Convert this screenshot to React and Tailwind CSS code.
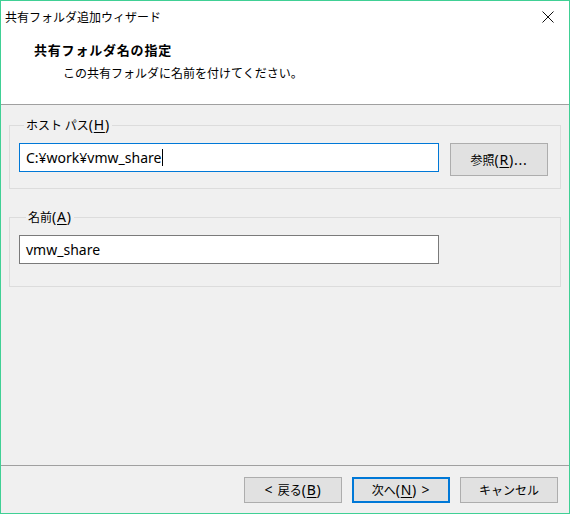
import React from "react";

const cjk = { fontFamily: '"Noto Sans CJK JP", "Noto Sans", sans-serif' };
const lat = { fontFamily: '"Noto Sans", "Noto Sans CJK JP", sans-serif' };

function U({ children }) {
  return <span className="underline underline-offset-[2px]">{children}</span>;
}

function L({ children }) {
  return (
    <span className="text-[14px] tracking-[0.8px]" style={lat}>
      {children}
    </span>
  );
}

function Btn({ children, primary, tall }) {
  return (
    <div
      className={
        "w-[98px] flex items-center justify-center bg-[#e1e1e1] text-[12px] leading-[16px] text-black " +
        (tall ? "h-[33px] " : "h-[26px] ") +
        (primary ? "border-2 border-[#0078d7]" : "border border-[#adadad]")
      }
    >
      <span className="whitespace-pre">{children}</span>
    </div>
  );
}

export default function App() {
  return (
    <div
      className="w-[570px] h-[514px] border border-[#40d095] flex flex-col bg-[#f0f0f0] text-black"
      style={cjk}
    >
      {/* title bar */}
      <div className="h-[31px] bg-white flex items-center justify-between pl-[4px] pr-[15px]">
        <span className="text-[12px] leading-[16px]">共有フォルダ追加ウィザード</span>
        <svg width="12" height="12" viewBox="0 0 12 12" className="block">
          <path d="M0.5 0.5 L11.5 11.5 M11.5 0.5 L0.5 11.5" stroke="#111" strokeWidth="1" />
        </svg>
      </div>
      {/* header */}
      <div className="h-[73px] bg-white border-b border-[#a0a0a0] pl-[33px] pt-[9px] flex flex-col">
        <div className="text-[13px] leading-[18px] font-bold tracking-[0.8px]">共有フォルダ名の指定</div>
        <div className="text-[12px] leading-[18px] pl-[29px] mt-[5px]">この共有フォルダに名前を付けてください。</div>
      </div>
      {/* body */}
      <div className="flex-1 px-[8px] pt-[12px] flex flex-col">
        <fieldset className="border border-[#dcdcdc] pl-[9px] pr-[12px] pb-[12px]">
          <legend className="ml-[5px] px-[2px] h-[16px] text-[12px] leading-[16px] whitespace-nowrap">
            ホスト パス<L>(<U>H</U>)</L>
          </legend>
          <div className="mt-[10px] flex items-start gap-[11px]">
            <div
              className="w-[420px] h-[29px] bg-white border border-[#0078d7] flex items-center pl-[6px] text-[14px]"
              style={lat}
            >
              <span>C:¥work¥vmw_share</span>
              <span className="w-px h-[17px] bg-black ml-[1px]" />
            </div>
            <Btn tall>
              参照<L>(<U>R</U>)...</L>
            </Btn>
          </div>
        </fieldset>
        <fieldset className="mt-[20px] border border-[#dcdcdc] pl-[9px] pr-[12px] pb-[22px]">
          <legend className="ml-[7px] px-[2px] h-[16px] text-[12px] leading-[16px] whitespace-nowrap">
            名前<L>(<U>A</U>)</L>
          </legend>
          <div className="mt-[10px]">
            <div
              className="w-[420px] h-[29px] bg-white border border-[#7a7a7a] flex items-center pl-[6px] text-[14px]"
              style={lat}
            >
              vmw_share
            </div>
          </div>
        </fieldset>
      </div>
      {/* footer */}
      <div className="border-t border-[#a0a0a0] pt-[11px] pb-[10px] pr-[11px] flex justify-end gap-[10px]">
        <Btn>
          <L>{"< "}</L>戻る<L>(<U>B</U>)</L>
        </Btn>
        <Btn primary>
          次へ<L>(<U>N</U>){" >"}</L>
        </Btn>
        <Btn>キャンセル</Btn>
      </div>
    </div>
  );
}
